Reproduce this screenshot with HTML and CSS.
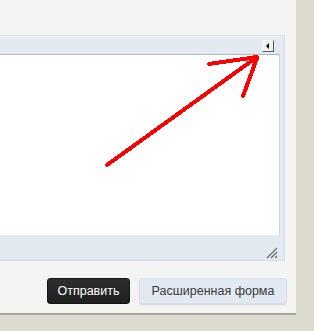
FILE: index.html
```html
<!DOCTYPE html>
<html lang="ru">
    <head>
        <meta charset="utf-8">
        <title>Ответ</title>
<link rel="stylesheet" href="styles.css">
</head>
<body>

<div class="page">
  <div class="editor">
    <div class="toolbar">
      <a class="toggle" title="Свернуть"><span class="tri"></span></a>
    </div>
    <div class="content"></div>
    <div class="statusbar">
      <svg class="grip" width="12" height="12" viewBox="0 0 12 12">
        <path d="M1 11 L11 1 M5 11 L11 5 M9 11 L11 9" stroke="#6f6f6f" stroke-width="1.3" fill="none"/>
      </svg>
    </div>
  </div>

  <div class="actions">
    <a class="button dark">Отправить</a>
    <a class="button light">Расширенная форма</a>
  </div>

  <!-- red annotation arrow over the editor -->
  <svg class="arrow" width="296" height="313" viewBox="0 0 296 313">
    <g stroke="#ff0000" stroke-width="4" stroke-linecap="round" fill="none">
      <path d="M107 165 L257 57"/>
      <path d="M209 64 L257 57"/>
      <path d="M243 96 L257 58"/>
    </g>
  </svg>
</div>

</body>
</html>
```

FILE: styles.css
```css
body {
  margin: 0;
  background: #dddbcf;
  font-family: "Liberation Sans", Arial, sans-serif;
  font-size: 13px;
}

.page {
  position: relative;
  width: 296px;
  height: 313px;
  background: #f4f4f4;
  border-bottom: 2px solid #a9a797;
  overflow: hidden;
}

.editor {
  margin: 35px 0 0 -10px;
  width: 295px;
  background: #e3e9f1;
  border: 1px solid #d3dce5;
  box-shadow: inset 0 1px 0 #f7f9fb;
  padding-right: 4px;
  box-sizing: border-box;
}

.toolbar {
  height: 18px;
  display: flex;
  justify-content: flex-end;
  align-items: flex-start;
}

.toggle {
  display: flex;
  align-items: center;
  justify-content: center;
  width: 12px;
  height: 12px;
  margin: 4px 6px 0 0;
  box-sizing: border-box;
  background: #eef1f4;
  border-top: 1px solid #fff;
  border-left: 1px solid #fff;
  border-right: 1px solid #5a5a5a;
  border-bottom: 1px solid #5a5a5a;
}

.tri {
  width: 0;
  height: 0;
  border-top: 3px solid transparent;
  border-bottom: 3px solid transparent;
  border-right: 3px solid #000;
  margin-left: -1px;
}

.content {
  height: 180px;
  background: #fff;
  border-top: 1px solid #b3b6b9;
  border-right: 1px solid #cbd4de;
}

.statusbar {
  height: 25px;
  display: flex;
  justify-content: flex-end;
  align-items: flex-end;
}

.grip {
  margin: 0 2px 1px 0;
}

.actions {
  display: flex;
  justify-content: flex-end;
  gap: 9px;
  margin-top: 17px;
  padding-right: 9px;
}

.button {
  display: flex;
  align-items: center;
  justify-content: center;
  height: 26px;
  box-sizing: border-box;
  border-radius: 3px;
  font-size: 12.5px;
  text-decoration: none;
  white-space: nowrap;
}

.button.dark {
  width: 83px;
  background: #262626;
  background: linear-gradient(#2e2e2e, #1f1f1f);
  border: 1px solid #141414;
  color: #fff;
}

.button.light {
  width: 148px;
  background: #e3e9f1;
  border: 1px solid #d8dfe8;
  box-shadow: 0 1px 1px rgba(0,0,0,.12);
  color: #3b3b3b;
}

.arrow {
  position: absolute;
  top: 0;
  left: 0;
  shape-rendering: crispEdges;
}
```
